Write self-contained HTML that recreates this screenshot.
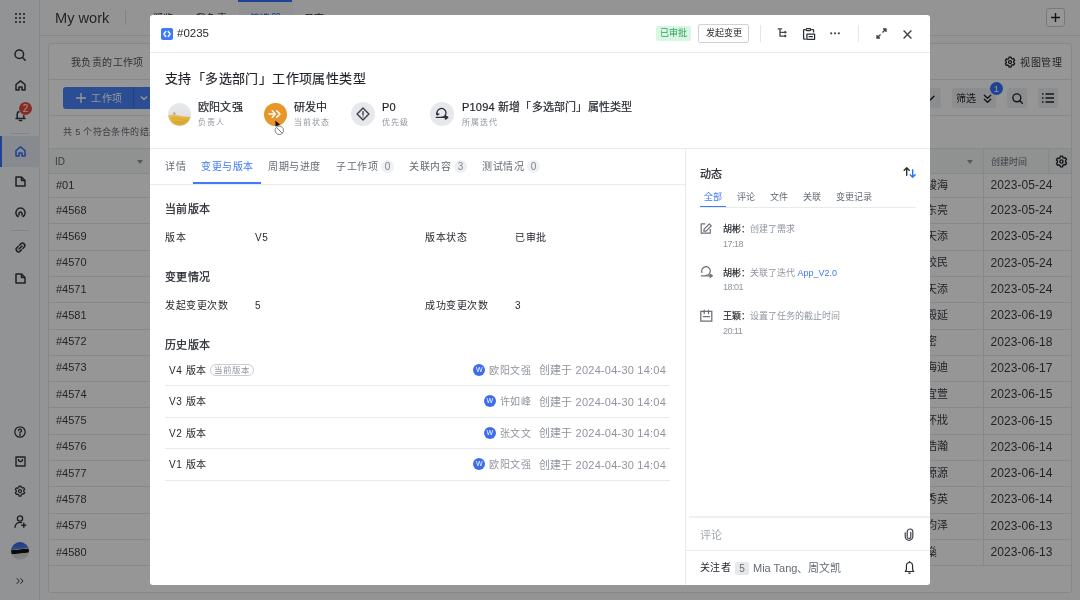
<!DOCTYPE html>
<html lang="zh-CN">
<head>
<meta charset="utf-8">
<style>
*{box-sizing:border-box;margin:0;padding:0}
html,body{width:1080px;height:600px;overflow:hidden;font-family:"Liberation Sans",sans-serif;color:#1f2329;background:#fff}
.t{position:absolute;white-space:nowrap;line-height:1}
.a{position:absolute}
#bg{will-change:transform;position:absolute;left:0;top:0;width:1080px;height:600px;background:#fbfbfc;overflow:hidden}
#side{position:absolute;left:0;top:0;width:40px;height:600px;background:#f9fafb;border-right:1px solid #e4e6e9}
#hdr{position:absolute;left:40px;top:0;width:1040px;height:36px;background:#fcfcfd;border-bottom:1px solid #e4e6e9}
#card{position:absolute;left:48px;top:43px;width:1024px;height:549.5px;background:#fff;border:1px solid #e4e6e9;border-radius:3px;overflow:hidden}
#mask{position:absolute;left:0;top:0;width:1080px;height:600px;background:rgba(0,0,0,0.41)}
#modal{will-change:transform;position:absolute;left:150px;top:15px;width:780px;height:570px;background:#fff;border-radius:3px;overflow:hidden}
.hl{position:absolute;height:1px;background:#e9eaec}
.vl{position:absolute;width:1px;background:#e9eaec}
svg{position:absolute;overflow:visible}
.row{position:absolute;left:0;width:1024px;height:1px;background:#e6e8eb}
.id{position:absolute;left:7px;font-size:11px;color:#3a3e45;line-height:1}
.dt{position:absolute;left:941.5px;font-size:12px;letter-spacing:0.05px;color:#3a3e45;line-height:1}
.nm{position:absolute;left:866px;font-size:11px;color:#3a3e45;line-height:1}
.lbl{font-size:11px;color:#1f2329}
.badge{position:absolute;width:13px;height:13px;border-radius:6.5px;background:#eef0f3;color:#7d838c;font-size:10px;line-height:13px;text-align:center}
</style>
</head>
<body>
<div id="bg">
  <div id="side">
    <!-- grid -->
    <svg style="left:15px;top:13px" width="10" height="10" viewBox="0 0 10 10" fill="#33373d">
      <circle cx="1" cy="1" r="1.05"/><circle cx="5" cy="1" r="1.05"/><circle cx="9" cy="1" r="1.05"/>
      <circle cx="1" cy="5" r="1.05"/><circle cx="5" cy="5" r="1.05"/><circle cx="9" cy="5" r="1.05"/>
      <circle cx="1" cy="9" r="1.05"/><circle cx="5" cy="9" r="1.05"/><circle cx="9" cy="9" r="1.05"/>
    </svg>
    <!-- search -->
    <svg style="left:14px;top:49px" width="12" height="12" viewBox="0 0 12 12" fill="none" stroke="#33373d" stroke-width="1.5"><circle cx="5.3" cy="5.3" r="4.3"/><path d="M8.5 8.5 11.2 11.2" stroke-linecap="round"/></svg>
    <!-- home -->
    <svg style="left:14.5px;top:80px" width="11" height="11" viewBox="0 0 11 11" fill="none" stroke="#33373d" stroke-width="1.5" stroke-linejoin="round"><path d="M1 4.5 5.5 0.9 10 4.5V10H7V7H4V10H1Z"/></svg>
    <!-- bell -->
    <svg style="left:14.5px;top:109px" width="11" height="13" viewBox="0 0 11 13" fill="none" stroke="#33373d" stroke-width="1.5" stroke-linejoin="round"><path d="M2.2 9.5V5.5a3.3 3.3 0 0 1 6.6 0v4H10H1Z"/><path d="M4.3 11.6h2.4" stroke-linecap="round"/></svg>
    <div class="a" style="left:19px;top:102px;width:13px;height:13px;border-radius:7px;background:#e84a40;color:#fff;font-size:10px;line-height:13px;text-align:center;box-shadow:0 0 0 .5px #fff">2</div>
    <div class="a" style="left:11px;top:133px;width:18px;height:1px;background:#dcdee2"></div>
    <!-- active -->
    <div class="a" style="left:0;top:136px;width:40px;height:31px;background:#e6eaf3"></div>
    <div class="a" style="left:0;top:136px;width:2px;height:31px;background:#3370ff"></div>
    <svg style="left:14.5px;top:146px" width="11" height="11" viewBox="0 0 11 11" fill="none" stroke="#3370ff" stroke-width="1.5" stroke-linejoin="round"><path d="M1 4.5 5.5 0.9 10 4.5V10H7V7H4V10H1Z"/></svg>
    <!-- doc -->
    <svg style="left:15px;top:176px" width="11" height="11" viewBox="0 0 11 11" fill="none" stroke="#33373d" stroke-width="1.5" stroke-linejoin="round"><path d="M1 1H6.5L10 4.5V10H1Z"/><path d="M6.5 1V4.5H10" /></svg>
    <!-- circle icon -->
    <svg style="left:14.5px;top:206.5px" width="11" height="11" viewBox="0 0 11 11" fill="none" stroke="#33373d" stroke-width="1.5" stroke-linecap="round"><path d="M3 9.5A4.6 4.6 0 1 1 8 9.5"/><path d="M4 8V6.5a1.5 1.5 0 0 1 3 0V8"/></svg>
    <div class="a" style="left:11px;top:230px;width:18px;height:1px;background:#dcdee2"></div>
    <!-- link -->
    <svg style="left:14.5px;top:242px" width="11" height="11" viewBox="0 0 11 11" fill="none" stroke="#33373d" stroke-width="1.5" stroke-linecap="round"><path d="M4.5 3.2 5.8 1.9a2.3 2.3 0 0 1 3.3 3.3L7.8 6.5"/><path d="M6.5 7.8 5.2 9.1a2.3 2.3 0 0 1-3.3-3.3L3.2 4.5"/><path d="M4 7 7 4"/></svg>
    <svg style="left:15px;top:273px" width="11" height="11" viewBox="0 0 11 11" fill="none" stroke="#33373d" stroke-width="1.5" stroke-linejoin="round"><path d="M1 1H6.5L10 4.5V10H1Z"/><path d="M6.5 1V4.5H10" /></svg>
    <!-- bottom icons -->
    <svg style="left:14px;top:426px" width="12" height="12" viewBox="0 0 12 12" fill="none" stroke="#33373d" stroke-width="1.3" stroke-linecap="round"><circle cx="6" cy="6" r="5.2"/><path d="M4.5 4.6a1.5 1.5 0 1 1 2.2 1.3C6.2 6.2 6 6.5 6 7.2"/><circle cx="6" cy="9" r="0.3" fill="#33373d"/></svg>
    <svg style="left:14.5px;top:455.5px" width="11" height="11" viewBox="0 0 11 11" fill="none" stroke="#33373d" stroke-width="1.4" stroke-linejoin="round"><path d="M1 1H10V10H1Z"/><path d="M3.5 3.5a2 2 0 0 0 4 0" stroke-linecap="round"/></svg>
    <svg style="left:14px;top:485px" width="12" height="12" viewBox="0 0 24 24" fill="none" stroke="#33373d" stroke-width="2.5" stroke-linejoin="round"><path d="M10 2h4l.6 2.6 2.2 1.3 2.6-.8 2 3.4-2 1.9v2.6l2 1.9-2 3.4-2.6-.8-2.2 1.3L14 22h-4l-.6-2.6-2.2-1.3-2.6.8-2-3.4 2-1.9V11l-2-1.9 2-3.4 2.6.8 2.2-1.3Z"/><circle cx="12" cy="12" r="3"/></svg>
    <svg style="left:14px;top:515px" width="13" height="13" viewBox="0 0 13 13" fill="none" stroke="#33373d" stroke-width="1.4" stroke-linecap="round"><circle cx="6" cy="3.5" r="2.6"/><path d="M1 12.2a5 5 0 0 1 6.5-4.6"/><path d="M9.8 8.2v4M7.8 10.2h4"/></svg>
    <div class="a" style="left:11.1px;top:541.8px;width:18px;height:18px;border-radius:50%;overflow:hidden;background:linear-gradient(174deg,#2f5de0 0%,#4f80ea 38%,#bcc6d8 41%,#141416 44%,#141416 60%,#d8d6d8 64%,#e6e4e6 100%)"></div>
    <svg style="left:16px;top:578px" width="8" height="6" viewBox="0 0 8 6" fill="none" stroke="#33373d" stroke-width="1" stroke-linecap="round" stroke-linejoin="round"><path d="M1 .5 3.3 3 1 5.5M4.7 .5 7 3 4.7 5.5"/></svg>
  </div>
  <div id="hdr">
    <div class="t" style="left:15px;top:11px;font-size:14.6px;color:#3a3e45">My work</div>
    <div class="a" style="left:85px;top:10px;width:1px;height:15px;background:#dcdee2"></div>
    <div class="t" style="left:113px;top:13.5px;font-size:10px;letter-spacing:0.4px;color:#1f2329">概览</div>
    <div class="t" style="left:156px;top:13.5px;font-size:10px;letter-spacing:0.4px;color:#1f2329">我负责</div>
    <div class="a" style="left:198.5px;top:0;width:54px;height:36px;background:#f3f5f9"></div>
    <div class="a" style="left:198px;top:0;width:54px;height:2px;background:#3370ff"></div>
    <div class="t" style="left:210px;top:13.5px;font-size:10px;letter-spacing:0.4px;color:#3370ff">筛选器</div>
    <div class="t" style="left:264px;top:13.5px;font-size:10px;letter-spacing:0.4px;color:#1f2329">日志</div>
    <div class="a" style="left:1006px;top:8px;width:19px;height:19px;border:1px solid #c9cdd4;border-radius:3px;background:#fff"></div>
    <svg style="left:1010px;top:12px" width="11" height="11" viewBox="0 0 11 11" stroke="#1f2329" stroke-width="1.4"><path d="M5.5 1v9M1 5.5h9"/></svg>
  </div>
  <div id="card">
    <div class="t" style="left:22px;top:14px;font-size:10px;letter-spacing:0.4px;color:#50555c">我负责的工作项</div>
    <svg style="left:954.5px;top:11.5px" width="12" height="12" viewBox="0 0 24 24" fill="none" stroke="#1f2329" stroke-width="2.5" stroke-linejoin="round"><path d="M10 2h4l.6 2.6 2.2 1.3 2.6-.8 2 3.4-2 1.9v2.6l2 1.9-2 3.4-2.6-.8-2.2 1.3L14 22h-4l-.6-2.6-2.2-1.3-2.6.8-2-3.4 2-1.9V11l-2-1.9 2-3.4 2.6.8 2.2-1.3Z"/><circle cx="12" cy="12" r="3"/></svg>
    <div class="t" style="left:971px;top:14px;font-size:10px;letter-spacing:0.6px;color:#3a3e45">视图管理</div>
    <div class="row" style="top:35px"></div>
    <div class="a" style="left:14px;top:43px;width:110px;height:22px;background:#4884fb;border-radius:3px"></div>
    <div class="a" style="left:84px;top:43px;width:1px;height:22px;background:#3a6fe0"></div>
    <svg style="left:27px;top:49px" width="10" height="10" viewBox="0 0 10 10" stroke="#fff" stroke-width="1.4"><path d="M5 0v10M0 5h10"/></svg>
    <div class="t" style="left:42px;top:49.5px;font-size:10px;letter-spacing:0.6px;color:#fff">工作项</div>
    <svg style="left:91px;top:51px" width="8" height="6" viewBox="0 0 8 6" fill="none" stroke="#fff" stroke-width="1.4"><path d="M1 1.5 4 4.5 7 1.5"/></svg>
    <div class="a" style="left:843px;top:44px;width:49px;height:20px;background:#eff0f2;border-radius:3px"></div>
    <div class="a" style="left:903px;top:44px;width:44px;height:20px;background:#eff0f2;border-radius:3px"></div>
    <svg style="left:877px;top:51px" width="9" height="6" viewBox="0 0 9 6" fill="none" stroke="#1f2329" stroke-width="1.4" stroke-linecap="round" stroke-linejoin="round"><path d="M1 1.2 4.5 4.8 8 1.2"/></svg>
    <div class="t" style="left:907px;top:49.5px;font-size:10px;color:#1f2329">筛选</div>
    <svg style="left:934px;top:49.5px" width="9" height="10" viewBox="0 0 9 10" fill="none" stroke="#1f2329" stroke-width="1.4" stroke-linecap="round" stroke-linejoin="round"><path d="M1.3 1.2 4.5 4.2 7.7 1.2M1.3 5.2 4.5 8.2 7.7 5.2"/></svg>
    <div class="a" style="left:941px;top:37.5px;width:13px;height:13px;border-radius:7px;background:#3370ff;color:#fff;font-size:9.5px;line-height:13px;text-align:center">1</div>
    <div class="a" style="left:958px;top:44px;width:20px;height:20px;background:#eff0f2;border-radius:3px"></div>
    <svg style="left:962.5px;top:48.5px" width="11" height="11" viewBox="0 0 12 12" fill="none" stroke="#1f2329" stroke-width="1.5"><circle cx="5.3" cy="5.3" r="4.3"/><path d="M8.5 8.5 11.2 11.2" stroke-linecap="round"/></svg>
    <div class="a" style="left:989px;top:44px;width:20px;height:20px;background:#eff0f2;border-radius:3px"></div>
    <svg style="left:993px;top:49px" width="12" height="10" viewBox="0 0 12 10" fill="none" stroke="#1f2329" stroke-width="1.4"><path d="M0 1h1.5M3.5 1H12M0 5h1.5M3.5 5H12M0 9h1.5M3.5 9H12"/></svg>
    <div class="row" style="top:71px"></div>
    <div class="t" style="left:14px;top:84px;font-size:9px;letter-spacing:0.35px;color:#646a73">共 5 个符合条件的结果</div>
    <!-- table -->
    <div class="a" style="left:0;top:104px;width:1024px;height:26px;background:#f5f6f7;border-top:1px solid #e6e8eb;border-bottom:1px solid #e6e8eb"></div>
    <div class="t" style="left:6px;top:113px;font-size:10px;color:#646a73">ID</div>
    <svg style="left:88px;top:116px" width="6" height="4" viewBox="0 0 6 4" fill="#8f959e"><path d="M0 0h6L3 4Z"/></svg>
    <svg style="left:918px;top:116px" width="6" height="4" viewBox="0 0 6 4" fill="#8f959e"><path d="M0 0h6L3 4Z"/></svg>
    <div class="a" style="left:934px;top:104px;width:1px;height:418px;background:#e6e8eb"></div>
    <div class="a" style="left:999px;top:104px;width:1px;height:26px;background:#e6e8eb"></div>
    <div class="t" style="left:941.5px;top:114px;font-size:9px;color:#646a73">创建时间</div>
    <svg style="left:1005.5px;top:110.5px" width="13" height="13" viewBox="0 0 24 24" fill="none" stroke="#1f2329" stroke-width="2.5" stroke-linejoin="round"><path d="M10 2h4l.6 2.6 2.2 1.3 2.6-.8 2 3.4-2 1.9v2.6l2 1.9-2 3.4-2.6-.8-2.2 1.3L14 22h-4l-.6-2.6-2.2-1.3-2.6.8-2-3.4 2-1.9V11l-2-1.9 2-3.4 2.6.8 2.2-1.3Z"/><circle cx="12" cy="12" r="3"/></svg>
    <div id="rows"><div class="row" style="top:153px"></div><div class="id" style="top:135.75px">#01</div><div class="nm" style="top:135.75px">王骏海</div><div class="dt" style="top:135.25px">2023-05-24</div><div class="row" style="top:179.3px"></div><div class="id" style="top:160.65px">#4568</div><div class="nm" style="top:160.65px">李东亮</div><div class="dt" style="top:160.15px">2023-05-24</div><div class="row" style="top:205.6px"></div><div class="id" style="top:186.95px">#4569</div><div class="nm" style="top:186.95px">张天添</div><div class="dt" style="top:186.45px">2023-05-24</div><div class="row" style="top:231.9px"></div><div class="id" style="top:213.25px">#4570</div><div class="nm" style="top:213.25px">刘校民</div><div class="dt" style="top:212.75px">2023-05-24</div><div class="row" style="top:258.2px"></div><div class="id" style="top:239.54999999999998px">#4571</div><div class="nm" style="top:239.54999999999998px">陈天添</div><div class="dt" style="top:239.04999999999998px">2023-05-24</div><div class="row" style="top:284.5px"></div><div class="id" style="top:265.85px">#4581</div><div class="nm" style="top:265.85px">赵殿延</div><div class="dt" style="top:265.35px">2023-06-19</div><div class="row" style="top:310.8px"></div><div class="id" style="top:292.15px">#4572</div><div class="nm" style="top:292.15px">李密</div><div class="dt" style="top:291.65px">2023-06-18</div><div class="row" style="top:337.1px"></div><div class="id" style="top:318.45000000000005px">#4573</div><div class="nm" style="top:318.45000000000005px">周海迪</div><div class="dt" style="top:317.95000000000005px">2023-06-17</div><div class="row" style="top:363.4px"></div><div class="id" style="top:344.75px">#4574</div><div class="nm" style="top:344.75px">吴宜萱</div><div class="dt" style="top:344.25px">2023-06-15</div><div class="row" style="top:389.70000000000005px"></div><div class="id" style="top:371.05000000000007px">#4575</div><div class="nm" style="top:371.05000000000007px">郑怀戕</div><div class="dt" style="top:370.55000000000007px">2023-06-15</div><div class="row" style="top:416px"></div><div class="id" style="top:397.35px">#4576</div><div class="nm" style="top:397.35px">孙浩瀚</div><div class="dt" style="top:396.85px">2023-06-14</div><div class="row" style="top:442.3px"></div><div class="id" style="top:423.65px">#4577</div><div class="nm" style="top:423.65px">钱源源</div><div class="dt" style="top:423.15px">2023-06-14</div><div class="row" style="top:468.6px"></div><div class="id" style="top:449.95000000000005px">#4578</div><div class="nm" style="top:449.95000000000005px">冯秀英</div><div class="dt" style="top:449.45000000000005px">2023-06-14</div><div class="row" style="top:494.90000000000003px"></div><div class="id" style="top:476.25px">#4579</div><div class="nm" style="top:476.25px">陈昀泽</div><div class="dt" style="top:475.75px">2023-06-13</div><div class="row" style="top:521.2px"></div><div class="id" style="top:502.55000000000007px">#4580</div><div class="nm" style="top:502.55000000000007px">王燊</div><div class="dt" style="top:502.05000000000007px">2023-06-13</div></div>
  </div>
</div>
<div id="mask"></div>
<div id="modal">
  <!-- header -->
  <svg style="left:11px;top:13px" width="12" height="12" viewBox="0 0 12 12"><rect width="12" height="12" rx="2" fill="#3d7bf7"/><path d="M4.8 3.5 2.8 6l2 2.5M7.2 3.5 9.2 6l-2 2.5" stroke="#fff" stroke-width="1.3" fill="none" stroke-linecap="round" stroke-linejoin="round"/></svg>
  <div class="t" style="left:27px;top:13px;font-size:11.5px;color:#1f2329">#0235</div>
  <div class="a" style="left:506px;top:11px;width:35px;height:15px;border-radius:2px;background:#d9f5e3"></div>
  <div class="t" style="left:510px;top:14px;font-size:9px;color:#2ea45a">已审批</div>
  <div class="a" style="left:548px;top:9px;width:51px;height:19px;border-radius:2px;border:1px solid #d0d3d6"></div>
  <div class="t" style="left:556px;top:14px;font-size:9px;color:#1f2329">发起变更</div>
  <div class="a" style="left:610px;top:10px;width:1px;height:17px;background:#e4e6e9"></div>
  <svg style="left:627px;top:13px" width="11" height="11" viewBox="0 0 11 11" fill="none" stroke="#41464e" stroke-width="1.3" stroke-linecap="round"><path d="M1.2 .9H4.6M3 .9V8.1H6.6M3 4.3H6.6"/><circle cx="8.2" cy="4.3" r="1.25" fill="#41464e" stroke="none"/><circle cx="8.2" cy="8.1" r="1.25" fill="#41464e" stroke="none"/></svg>
  <svg style="left:653px;top:13px" width="13" height="12" viewBox="0 0 13 12" fill="none" stroke="#2b2f36" stroke-width="1.25" stroke-linejoin="round"><path d="M2.6 1.6H1.4Q.6 1.6 .6 2.4V10.5Q.6 11.2 1.4 11.2H2.8"/><rect x="3.1" y=".6" width="4.6" height="2" rx=".8"/><path d="M8.3 1.6H9.8Q10.6 1.6 10.6 2.4V4.6"/><path d="M3.9 6.1H11.6V11.3H3.9Z"/><path d="M6.1 8.7H9.4" stroke-linecap="round"/></svg>
  <svg style="left:680px;top:17px" width="10" height="3" viewBox="0 0 10 3" fill="#3d4148"><circle cx="1.2" cy="1.3" r="1.1"/><circle cx="5" cy="1.3" r="1.1"/><circle cx="8.8" cy="1.3" r="1.1"/></svg>
  <div class="a" style="left:708px;top:10px;width:1px;height:17px;background:#e4e6e9"></div>
  <svg style="left:726px;top:13px" width="11" height="11" viewBox="0 0 11 11" fill="none" stroke="#3d4148" stroke-width="1.3"><path d="M6.5 4.5 10 1M7 1H10V4M4.5 6.5 1 10M1 7V10H4"/></svg>
  <svg style="left:753px;top:14.5px" width="9" height="9" viewBox="0 0 9 9" fill="none" stroke="#3d4148" stroke-width="1.4"><path d="M.6 .6 8.4 8.4M8.4 .6 .6 8.4"/></svg>
  <div class="hl" style="left:0;top:37px;width:780px"></div>
  <!-- title -->
  <div class="t" style="left:15px;top:57px;font-size:13px;letter-spacing:0.4px;-webkit-text-stroke:0.15px #1f2329;color:#1f2329">支持「多选部门」工作项属性类型</div>
  <!-- fields -->
  <svg style="left:17.7px;top:87.8px" width="23" height="23" viewBox="0 0 23 23"><defs><clipPath id="avc"><circle cx="11.5" cy="11.5" r="11.3"/></clipPath><linearGradient id="sky" x1="0" y1="0" x2="0" y2="1"><stop offset="0" stop-color="#e8e9ea"/><stop offset="1" stop-color="#d9dbdd"/></linearGradient><linearGradient id="dune" x1="0" y1="0" x2="0.3" y2="1"><stop offset="0" stop-color="#e9c24a"/><stop offset=".5" stop-color="#e2b43a"/><stop offset="1" stop-color="#d7a52e"/></linearGradient></defs><g clip-path="url(#avc)"><rect width="23" height="23" fill="url(#sky)"/><path d="M0 12.2Q5 11.2 10 12.4T23 14V23H0Z" fill="url(#dune)"/><path d="M2 15.5Q8 14.2 14 16.5T23 17.5M4 19Q10 17.8 16 20" stroke="#c9962a" stroke-width=".7" fill="none" opacity=".6"/><path d="M5.3 11.7V10L6.4 9.1 7.5 10V11.5Z" fill="#aa9d96"/></g><circle cx="11.5" cy="11.5" r="11.1" fill="none" stroke="#d6e4f5" stroke-width=".5" opacity=".8"/></svg>
  <div class="t" style="left:48px;top:86.5px;font-size:11px;letter-spacing:0.2px;-webkit-text-stroke:0.2px #1f2329;color:#1f2329">欧阳文强</div>
  <div class="t" style="left:48px;top:104px;font-size:8px;letter-spacing:0.9px;color:#8f959e">负责人</div>
  <div class="a" style="left:114px;top:87.5px;width:23px;height:23px;border-radius:50%;background:#e8952a"></div>
  <svg style="left:118px;top:93.8px" width="13" height="10" viewBox="0 0 13 10" fill="none" stroke="#fff" stroke-width="1.5" stroke-linecap="round" stroke-linejoin="round"><path d="M1 5H6.3M4.3 1.7 7.3 5 4.3 8.3M8.7 1.7 12 5 8.7 8.3"/></svg>
  <!-- cursor -->
  <svg style="left:124.5px;top:105px" width="6" height="7" viewBox="0 0 6 7"><path d="M.3 .5 5 4.5 .5 6.5Z" fill="#111"/></svg>
  <svg style="left:124px;top:110px" width="11" height="11" viewBox="0 0 11 11" fill="none" stroke="#707070" stroke-width="0.9"><circle cx="5.3" cy="5.3" r="4.2" fill="#fff"/><path d="M2.33 2.33 8.27 8.27"/></svg>
  <div class="t" style="left:144px;top:86.5px;font-size:11px;letter-spacing:0.2px;-webkit-text-stroke:0.2px #1f2329;color:#1f2329">研发中</div>
  <div class="t" style="left:144px;top:104px;font-size:8px;letter-spacing:0.9px;color:#8f959e">当前状态</div>
  <div class="a" style="left:201px;top:87px;width:24px;height:24px;border-radius:50%;background:#e6e8eb"></div>
  <svg style="left:206px;top:92px" width="14" height="14" viewBox="0 0 14 14" fill="none" stroke="#3d4148" stroke-width="1.4" stroke-linejoin="round"><path d="M7 1.1 12.9 7 7 12.9 1.1 7Z"/><path d="M7 4.6V8" stroke-linecap="round"/><circle cx="7" cy="9.9" r=".55" fill="#3d4148" stroke="none"/></svg>
  <div class="t" style="left:232px;top:86.5px;font-size:11px;letter-spacing:0.2px;-webkit-text-stroke:0.2px #1f2329;color:#1f2329">P0</div>
  <div class="t" style="left:232px;top:104px;font-size:8px;letter-spacing:0.9px;color:#8f959e">优先级</div>
  <div class="a" style="left:280px;top:87px;width:24px;height:24px;border-radius:50%;background:#e6e8eb"></div>
  <svg style="left:285px;top:92px" width="14" height="14" viewBox="0 0 14 14" fill="none" stroke="#2b2f36" stroke-width="1.3" stroke-linecap="round" stroke-linejoin="round"><path d="M2.3 7.5A4.5 4.5 0 1 1 6.5 10.4"/><path d="M1.4 6.3 2.3 7.9 3.9 7" /><path d="M1.3 10.4H10.8"/><path d="M10.4 8.7 12.8 10.4 10.4 12.1Z" fill="#2b2f36"/></svg>
  <div class="t" style="left:312px;top:86.5px;font-size:11px;letter-spacing:0.2px;-webkit-text-stroke:0.2px #1f2329;color:#1f2329">P1094 新增「多选部门」属性类型</div>
  <div class="t" style="left:312px;top:104px;font-size:8px;letter-spacing:0.9px;color:#8f959e">所属迭代</div>
  <div class="hl" style="left:0;top:133px;width:780px"></div>
  <div class="vl" style="left:535px;top:134px;height:436px"></div>
  <!-- tabs -->
  <div class="t" style="left:15px;top:147px;font-size:10px;letter-spacing:0.6px;color:#646a73">详情</div>
  <div class="t" style="left:51px;top:147px;font-size:10px;letter-spacing:0.6px;color:#3d7bf7">变更与版本</div>
  <div class="t" style="left:118px;top:147px;font-size:10px;letter-spacing:0.6px;color:#646a73">周期与进度</div>
  <div class="t" style="left:186px;top:147px;font-size:10px;letter-spacing:0.6px;color:#646a73">子工作项</div>
  <div class="badge" style="left:231px;top:145px">0</div>
  <div class="t" style="left:259px;top:147px;font-size:10px;letter-spacing:0.6px;color:#646a73">关联内容</div>
  <div class="badge" style="left:304px;top:145px">3</div>
  <div class="t" style="left:332px;top:147px;font-size:10px;letter-spacing:0.6px;color:#646a73">测试情况</div>
  <div class="badge" style="left:377px;top:145px">0</div>
  <div class="a" style="left:43px;top:167px;width:68px;height:2px;background:#3d7bf7"></div>
  <div class="hl" style="left:0;top:169px;width:535px"></div>
  <!-- content -->
  <div class="t" style="left:15px;top:189px;font-size:11px;letter-spacing:0.3px;-webkit-text-stroke:0.25px #1f2329;color:#1f2329">当前版本</div>
  <div class="t" style="left:15px;top:218px;font-size:10px;letter-spacing:0.6px;color:#1f2329">版本</div>
  <div class="t" style="left:105px;top:218px;font-size:10px;letter-spacing:0.6px;color:#1f2329">V5</div>
  <div class="t" style="left:275px;top:218px;font-size:10px;letter-spacing:0.6px;color:#1f2329">版本状态</div>
  <div class="t" style="left:365px;top:218px;font-size:10px;letter-spacing:0.6px;color:#1f2329">已审批</div>
  <div class="t" style="left:15px;top:257px;font-size:11px;letter-spacing:0.3px;-webkit-text-stroke:0.25px #1f2329;color:#1f2329">变更情况</div>
  <div class="t" style="left:15px;top:286px;font-size:10px;letter-spacing:0.6px;color:#1f2329">发起变更次数</div>
  <div class="t" style="left:105px;top:286px;font-size:10px;letter-spacing:0.6px;color:#1f2329">5</div>
  <div class="t" style="left:275px;top:286px;font-size:10px;letter-spacing:0.6px;color:#1f2329">成功变更次数</div>
  <div class="t" style="left:365px;top:286px;font-size:10px;letter-spacing:0.6px;color:#1f2329">3</div>
  <div class="t" style="left:15px;top:325px;font-size:11px;letter-spacing:0.3px;-webkit-text-stroke:0.25px #1f2329;color:#1f2329">历史版本</div>
  <div id="hist"><div class="hl" style="left:15px;top:370px;width:505px"></div><div class="t" style="left:19px;top:350.5px;font-size:10px;letter-spacing:0.6px;color:#1f2329">V4 版本</div><div class="a" style="right:264px;top:348.5px;height:12px;display:flex;align-items:center;white-space:nowrap;color:#8f959e;line-height:1"><span style="display:block;width:12px;height:12px;border-radius:6px;background:#3d6cf0;color:#fff;font-size:7px;line-height:12px;text-align:center;margin-right:4px">W</span><span style="font-size:10px;letter-spacing:0.6px;position:relative;top:1px">欧阳文强</span><span style="margin-left:7px;font-size:11px;letter-spacing:0.22px;position:relative;top:1px">创建于 2024-04-30 14:04</span></div><div class="hl" style="left:15px;top:401.5px;width:505px"></div><div class="t" style="left:19px;top:382px;font-size:10px;letter-spacing:0.6px;color:#1f2329">V3 版本</div><div class="a" style="right:264px;top:380px;height:12px;display:flex;align-items:center;white-space:nowrap;color:#8f959e;line-height:1"><span style="display:block;width:12px;height:12px;border-radius:6px;background:#3d6cf0;color:#fff;font-size:7px;line-height:12px;text-align:center;margin-right:4px">W</span><span style="font-size:10px;letter-spacing:0.6px;position:relative;top:1px">许如峰</span><span style="margin-left:7px;font-size:11px;letter-spacing:0.22px;position:relative;top:1px">创建于 2024-04-30 14:04</span></div><div class="hl" style="left:15px;top:433px;width:505px"></div><div class="t" style="left:19px;top:413.5px;font-size:10px;letter-spacing:0.6px;color:#1f2329">V2 版本</div><div class="a" style="right:264px;top:411.5px;height:12px;display:flex;align-items:center;white-space:nowrap;color:#8f959e;line-height:1"><span style="display:block;width:12px;height:12px;border-radius:6px;background:#3d6cf0;color:#fff;font-size:7px;line-height:12px;text-align:center;margin-right:4px">W</span><span style="font-size:10px;letter-spacing:0.6px;position:relative;top:1px">张文文</span><span style="margin-left:7px;font-size:11px;letter-spacing:0.22px;position:relative;top:1px">创建于 2024-04-30 14:04</span></div><div class="hl" style="left:15px;top:464.5px;width:505px"></div><div class="t" style="left:19px;top:445px;font-size:10px;letter-spacing:0.6px;color:#1f2329">V1 版本</div><div class="a" style="right:264px;top:443px;height:12px;display:flex;align-items:center;white-space:nowrap;color:#8f959e;line-height:1"><span style="display:block;width:12px;height:12px;border-radius:6px;background:#3d6cf0;color:#fff;font-size:7px;line-height:12px;text-align:center;margin-right:4px">W</span><span style="font-size:10px;letter-spacing:0.6px;position:relative;top:1px">欧阳文强</span><span style="margin-left:7px;font-size:11px;letter-spacing:0.22px;position:relative;top:1px">创建于 2024-04-30 14:04</span></div><div class="a" style="left:60px;top:348.7px;width:44px;height:12px;border:1px solid #c9ccd0;border-radius:6px;color:#8f959e;font-size:8.5px;line-height:10px;text-align:center">当前版本</div></div>
  <!-- right pane -->
  <div class="t" style="left:550px;top:153.5px;font-size:11px;letter-spacing:0.1px;-webkit-text-stroke:0.25px #1f2329;color:#1f2329">动态</div>
  <svg style="left:752px;top:151px" width="15" height="13" viewBox="0 0 15 13" fill="none" stroke-width="1.4" stroke-linecap="round" stroke-linejoin="round"><path d="M4.7 1.8V9.3M2.2 4.3 4.7 1.8 7.2 4.3" stroke="#2b2f36"/><path d="M10.7 3.7V11.2M8.2 8.7 10.7 11.2 13.2 8.7" stroke="#3370ff"/></svg>
  <div class="t" style="left:554px;top:177.5px;font-size:9px;color:#3d7bf7">全部</div>
  <div class="t" style="left:587px;top:177.5px;font-size:9px;color:#646a73">评论</div>
  <div class="t" style="left:620px;top:177.5px;font-size:9px;color:#646a73">文件</div>
  <div class="t" style="left:653px;top:177.5px;font-size:9px;color:#646a73">关联</div>
  <div class="t" style="left:686px;top:177.5px;font-size:9px;color:#646a73">变更记录</div>
  <div class="a" style="left:550px;top:190.5px;width:26px;height:2px;background:#3d7bf7"></div>
  <div class="hl" style="left:550px;top:192px;width:216px"></div>
  <!-- entries -->
  <svg style="left:550px;top:208px" width="12" height="12" viewBox="0 0 12 12" fill="none" stroke="#6b7078" stroke-width="1.2" stroke-linejoin="round"><path d="M5.3 .8H1.2V10.2H10.3V6"/><path d="M3.8 8.2 4.1 6.1 9.3 .9 11.3 2.9 6.1 8.1Z"/></svg>
  <div class="t" style="left:573px;top:209.5px;font-size:9px;-webkit-text-stroke:0.2px #1f2329;color:#1f2329">胡彬：</div>
  <div class="t" style="left:600px;top:209.5px;font-size:9px;color:#8f959e">创建了需求</div>
  <div class="t" style="left:573px;top:225px;font-size:9px;letter-spacing:-0.5px;color:#8f959e">17:18</div>
  <svg style="left:550px;top:251px" width="14" height="12" viewBox="0 0 14 12" fill="none" stroke="#6b7078" stroke-width="1.2" stroke-linecap="round" stroke-linejoin="round"><path d="M1.96 6.47A4.3 4.3 0 1 1 6 9.3"/><path d="M1.3 9.8H10.4"/><path d="M10.2 8.3 12.4 9.8 10.2 11.3Z" fill="#6b7078"/></svg>
  <div class="t" style="left:573px;top:253.5px;font-size:9px;-webkit-text-stroke:0.2px #1f2329;color:#1f2329">胡彬：</div>
  <div class="t" style="left:600px;top:253.5px;font-size:9px;color:#8f959e">关联了迭代 <span style="color:#3d7bf7">App_V2.0</span></div>
  <div class="t" style="left:573px;top:268px;font-size:9px;letter-spacing:-0.5px;color:#8f959e">18:01</div>
  <svg style="left:550px;top:294px" width="13" height="13" viewBox="0 0 13 13" fill="none" stroke="#6b7078" stroke-width="1.25"><path d="M.8 2.3H11.8V12.2H.8Z"/><path d="M4.2 1.2V4.7M8.5 1.2V4.7" stroke-linecap="round"/><path d="M3.3 7.5H9.7" stroke-linecap="round"/></svg>
  <div class="t" style="left:573px;top:296.5px;font-size:9px;-webkit-text-stroke:0.2px #1f2329;color:#1f2329">王颖：</div>
  <div class="t" style="left:600px;top:296.5px;font-size:9px;color:#8f959e">设置了任务的截止时间</div>
  <div class="t" style="left:573px;top:312px;font-size:9px;letter-spacing:-0.5px;color:#8f959e">20:11</div>
  <!-- bottom -->
  <div class="a" style="left:539px;top:500.5px;width:241px;height:2px;background:#eff0f2"></div>
  <div class="t" style="left:550px;top:515px;font-size:11px;letter-spacing:-0.3px;color:#a2a7ae">评论</div>
  <svg style="left:754px;top:514px" width="10" height="11" viewBox="0 0 10 11" fill="none" stroke="#3d4148" stroke-width="1.2" stroke-linecap="round"><path d="M6.8 3.3V7.7a1.8 1.8 0 0 1-3.6 0V2.8a2.8 2.8 0 0 1 5.6 0V7.5a3.8 3.8 0 0 1-7.6 0V3.8"/></svg>
  <div class="hl" style="left:535px;top:535px;width:245px"></div>
  <div class="t" style="left:550px;top:548px;font-size:10px;letter-spacing:0.4px;color:#1f2329">关注者</div>
  <div class="a" style="left:585px;top:546.5px;width:14px;height:13px;border-radius:2px;background:#e6e8eb;color:#646a73;font-size:10px;line-height:13px;text-align:center">5</div>
  <div class="t" style="left:603px;top:547.5px;font-size:11px;color:#646a73">Mia Tang、周文凯</div>
  <svg style="left:753px;top:546px" width="13" height="14" viewBox="0 0 13 14" fill="none" stroke="#2b2f36" stroke-width="1.2" stroke-linejoin="round"><path d="M6.5 1.5C4.5 1.5 3.4 3 3.4 5V8.6L2.3 10.5H10.7L9.6 8.6V5C9.6 3 8.5 1.5 6.5 1.5Z"/><path d="M5.1 11.6A1.4 1.4 0 0 0 7.9 11.6Z" fill="#2b2f36" stroke="none"/><path d="M6.5 .6V1.5" stroke-linecap="round"/></svg>
</div>
</body>
</html>
